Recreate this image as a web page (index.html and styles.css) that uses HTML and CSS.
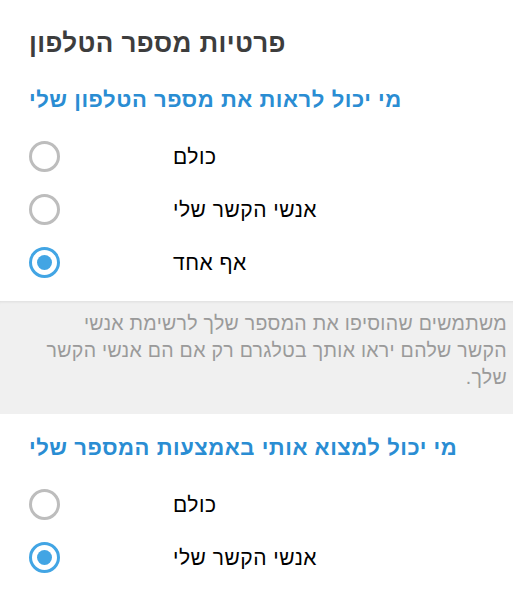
FILE: index.html
```html
<!DOCTYPE html>
<html lang="he">
<head>
<meta charset="utf-8">
<link rel="stylesheet" href="styles.css">
</head>
<body>
<div class="page">
  <h1 class="title" dir="rtl">פרטיות מספר הטלפון</h1>
  <section class="section">
    <h2 class="heading" dir="rtl">מי יכול לראות את מספר הטלפון שלי</h2>
    <div class="options">
      <label class="option"><span class="radio"></span><span class="label" dir="rtl">כולם</span></label>
      <label class="option"><span class="radio"></span><span class="label" dir="rtl">אנשי הקשר שלי</span></label>
      <label class="option"><span class="radio checked"></span><span class="label" dir="rtl">אף אחד</span></label>
    </div>
  </section>
  <div class="note" dir="rtl">משתמשים שהוסיפו את המספר שלך לרשימת אנשי הקשר שלהם יראו אותך בטלגרם רק אם הם אנשי הקשר שלך.</div>
  <section class="section second">
    <h2 class="heading" dir="rtl">מי יכול למצוא אותי באמצעות המספר שלי</h2>
    <div class="options">
      <label class="option"><span class="radio"></span><span class="label" dir="rtl">כולם</span></label>
      <label class="option"><span class="radio checked"></span><span class="label" dir="rtl">אנשי הקשר שלי</span></label>
    </div>
  </section>
</div>
</body>
</html>
```
FILE: styles.css
```css
html, body {
  margin: 0;
  padding: 0;
  background: #ffffff;
}
body {
  font-family: "Liberation Sans", sans-serif;
  width: 513px;
  height: 594px;
  overflow: hidden;
}
.page {
  display: flex;
  flex-direction: column;
}
.title {
  margin: 0;
  padding: 27px 0 0 29px;
  font-size: 26px;
  letter-spacing: 0.4px;
  line-height: 32px;
  font-weight: 700;
  color: #3d3d3d;
  align-self: flex-start;
}
.section {
  padding: 0 0 0 29px;
}
.heading {
  margin: 0;
  padding-top: 28px;
  font-size: 22px;
  letter-spacing: 0.55px;
  line-height: 26px;
  font-weight: 700;
  color: #2a8dd3;
  display: inline-block;
}
.second .heading {
  padding-top: 21px;
}
.options {
  display: flex;
  flex-direction: column;
  padding-top: 17px;
  padding-bottom: 12px;
}
.option {
  display: flex;
  align-items: center;
  height: 53px;
  gap: 113px;
}
.radio {
  box-sizing: border-box;
  width: 31px;
  height: 31px;
  border: 3px solid #bdbdbd;
  border-radius: 50%;
  display: flex;
  align-items: center;
  justify-content: center;
  flex-shrink: 0;
}
.radio.checked {
  border-color: #42a5e4;
}
.radio.checked::after {
  content: "";
  width: 15px;
  height: 15px;
  border-radius: 50%;
  background: #42a5e4;
}
.label {
  font-size: 21px;
  letter-spacing: 0.5px;
  color: #000;
  line-height: 24px;
}
.note {
  background: #f0f0f0;
  box-shadow: inset 0 3px 3px -2px rgba(0,0,0,0.08);
  color: #9a9a9a;
  font-size: 19.5px;
  letter-spacing: 0.3px;
  line-height: 27px;
  padding: 9px 6px 23px 34px;
  text-align: right;
}
</style>
```
